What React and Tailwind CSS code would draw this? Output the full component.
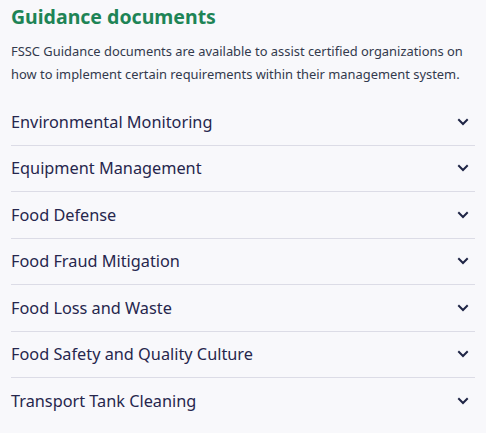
import React from "react";

const items = [
  "Environmental Monitoring",
  "Equipment Management",
  "Food Defense",
  "Food Fraud Mitigation",
  "Food Loss and Waste",
  "Food Safety and Quality Culture",
  "Transport Tank Cleaning",
];

function Chevron() {
  return (
    <svg width="12" height="12" viewBox="0 0 12 12" fill="none">
      <path d="M2 4l4 4 4-4" stroke="#1f2545" strokeWidth="2" strokeLinecap="square" />
    </svg>
  );
}

export default function App() {
  return (
    <div className="w-[486px] h-[433px] bg-[#f8f8fb] px-[11px] pt-[3px]" style={{ fontFamily: '"Noto Sans", sans-serif' }}>
      <h2 className="text-[19.5px] leading-[28px] font-bold text-[#1e8456]">Guidance documents</h2>
      <p className="mt-[9px] text-[12.9px] leading-[23px] text-[#333a4d] whitespace-nowrap">
        FSSC Guidance documents are available to assist certified organizations on
        <br />
        how to implement certain requirements within their management system.
      </p>
      <div className="mt-[13px] w-[464px]">
        {items.map((t, i) => (
          <div
            key={t}
            className={`flex items-center justify-between h-[46.5px] pr-[6px] ${i < items.length - 1 ? "border-b border-[#dcdce6]" : ""}`}
          >
            <span className="text-[16.3px] text-[#26264d]">{t}</span>
            <Chevron />
          </div>
        ))}
      </div>
    </div>
  );
}
